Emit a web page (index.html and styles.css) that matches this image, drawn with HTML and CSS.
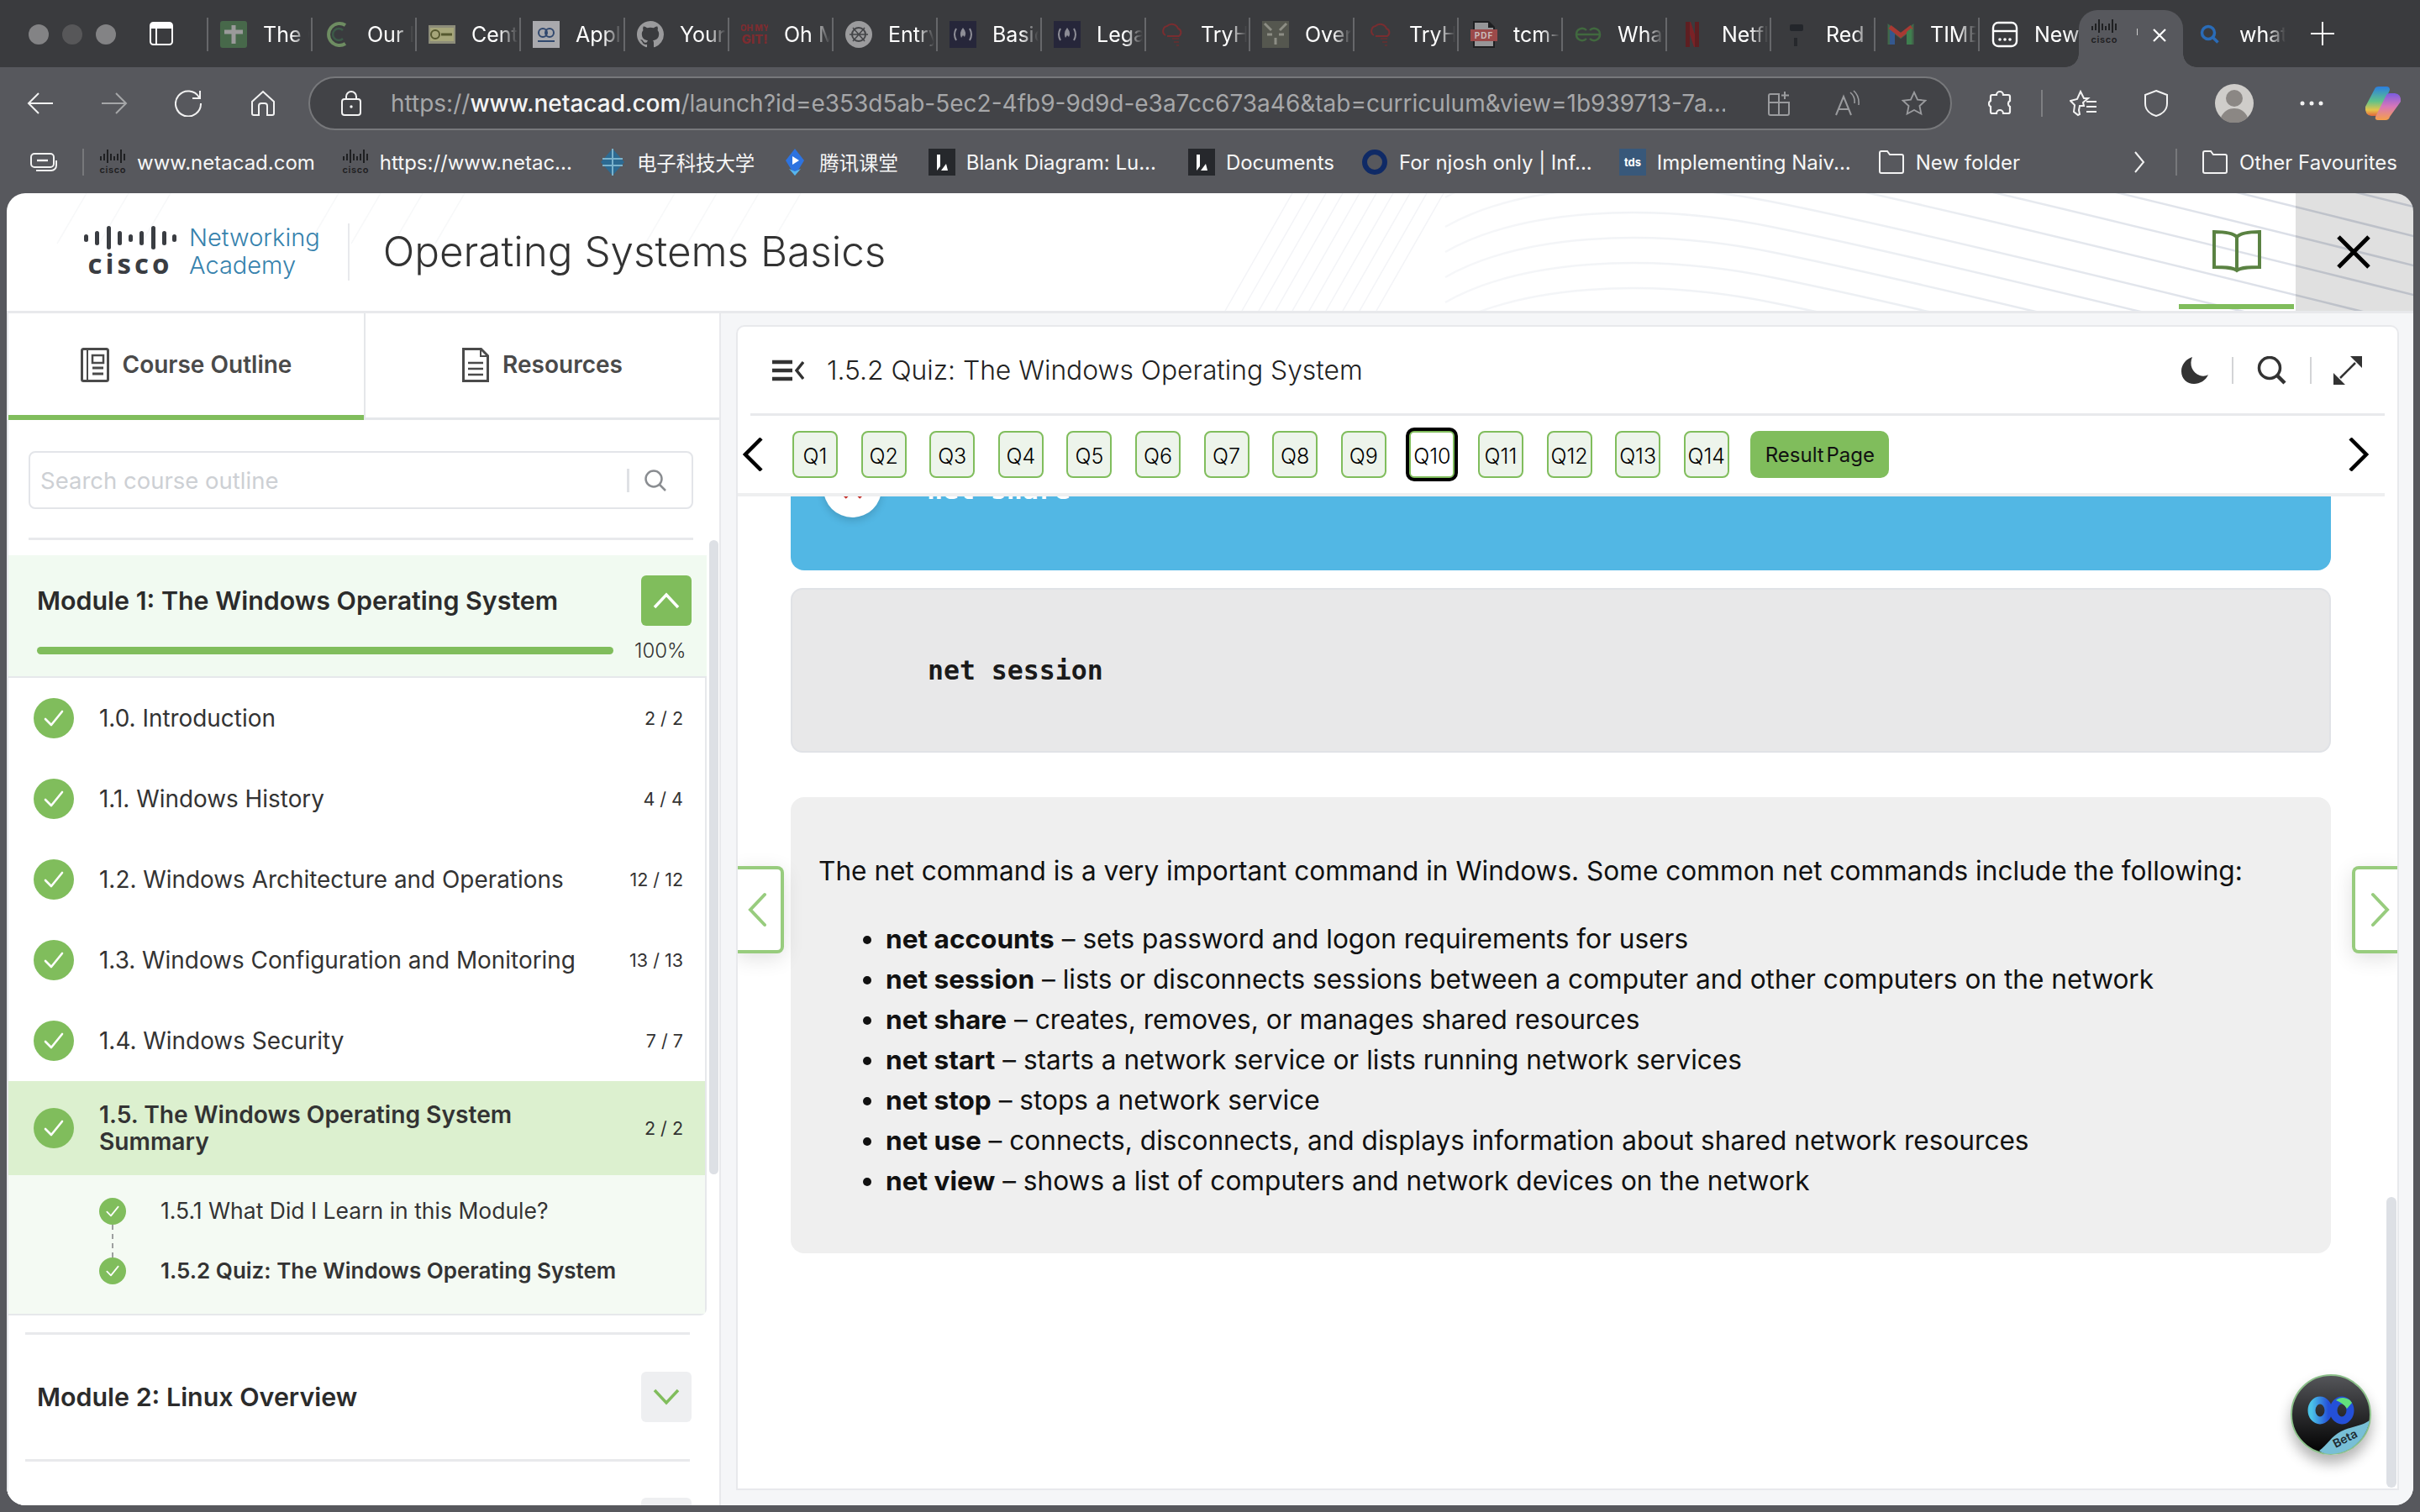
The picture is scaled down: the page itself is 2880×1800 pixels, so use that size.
FILE: index.html
```html
<!DOCTYPE html>
<html lang="en">
<head>
<meta charset="utf-8">
<title>Operating Systems Basics</title>
<link rel="stylesheet" href="styles.css">
</head>
<body>
<svg class="defs" aria-hidden="true">
  <symbol id="cisco" viewBox="0 0 32 32">
    <g fill="#1f2022">
      <rect x="1" y="9" width="2" height="5"/><rect x="5" y="6" width="2" height="8"/><rect x="9" y="1" width="2" height="16"/><rect x="13" y="6" width="2" height="8"/><rect x="17" y="9" width="2" height="5"/><rect x="21" y="6" width="2" height="8"/><rect x="25" y="1" width="2" height="16"/><rect x="29" y="6" width="2" height="8"/>
      <text x="16" y="29" font-size="11" font-family="Inter" font-weight="600" text-anchor="middle" textLength="31">cisco</text>
    </g>
  </symbol>
  <symbol id="check" viewBox="0 0 48 48">
    <circle cx="24" cy="24" r="24" fill="#80bd5c"/>
    <path d="M14 25l7 7 13-16" fill="none" stroke="#fff" stroke-width="2.6" stroke-linecap="round" stroke-linejoin="round"/>
  </symbol>
  <symbol id="lucid" viewBox="0 0 32 32">
    <rect width="32" height="32" fill="#26282c"/>
    <path d="M10 7h4v14l-4 5z" fill="#fff"/><path d="M15 26l6-8 2 8z" fill="#fff"/>
  </symbol>
  <symbol id="fcc" viewBox="0 0 32 32">
    <rect width="32" height="32" fill="#26263a"/>
    <path d="M8 9q-4 7 0 14M24 9q4 7 0 14" fill="none" stroke="#8d8d96" stroke-width="2"/>
    <path d="M16 8q5 6 2 11l-2-2-2 3q-3-6 2-12z" fill="#8d8d96"/>
  </symbol>
  <symbol id="thm" viewBox="0 0 32 32">
    <path d="M9 17a6 6 0 0 1 2-11 8 8 0 0 1 13 3 5 5 0 0 1 1 9H11" fill="none" stroke="#7a2d30" stroke-width="2"/>
    <path d="M17 21h8M19 25h6M22 29h3" stroke="#5c3133" stroke-width="2"/>
  </symbol>
  <symbol id="folder" viewBox="0 0 32 32">
    <path d="M2 5a2 2 0 0 1 2-2h7l3 4h14a2 2 0 0 1 2 2v18a2 2 0 0 1-2 2H4a2 2 0 0 1-2-2z" fill="none" stroke="#f2f2f2" stroke-width="2"/>
  </symbol>
</svg>

<div class="tabstrip">
  <div class="dots"><i class="dot"></i><i class="dot dot-dim"></i><i class="dot"></i></div>
  <svg class="win-icon" viewBox="0 0 28 28"><rect x="1" y="1" width="26" height="26" rx="3.5" fill="none" stroke="#fff" stroke-width="2"/><path d="M1 4.500a3.500 3.500 0 0 1 3.500-3.500h19a3.500 3.500 0 0 1 3.500 3.500v3.500H1z" fill="#fff"/><path d="M8 8v19" stroke="#fff" stroke-width="2"/></svg>
  <div class="tab"><svg class="fav" viewBox="0 0 32 32"><rect width="32" height="32" rx="3" fill="#47684a"/><path d="M16 5v22M5 13h22" stroke="#9a9a9a" stroke-width="5"/></svg><span class="label">The G</span></div>
  <div class="tab"><svg class="fav" viewBox="0 0 32 32"><path d="M25 5a13 13 0 1 0 0 22" fill="none" stroke="#6e8d62" stroke-width="4"/><path d="M22 11a7 7 0 1 0 0 10" fill="none" stroke="#3c5a48" stroke-width="2.500"/></svg><span class="label">Our F</span></div>
  <div class="tab"><svg class="fav" viewBox="0 0 32 32"><rect y="5" width="32" height="22" fill="#8d8d7a"/><rect x="2" y="8" width="28" height="16" fill="#b8b87a" opacity=".6"/><circle cx="8" cy="16" r="5" fill="none" stroke="#55582f" stroke-width="2"/><path d="M15 16h13" stroke="#55582f" stroke-width="3"/></svg><span class="label">Centr</span></div>
  <div class="tab"><svg class="fav" viewBox="0 0 32 32"><rect width="32" height="32" fill="#a9a9ad"/><circle cx="12" cy="14" r="5" fill="none" stroke="#31486e" stroke-width="2"/><circle cx="20" cy="14" r="5" fill="none" stroke="#31486e" stroke-width="2"/><path d="M6 24h20" stroke="#31486e" stroke-width="2"/></svg><span class="label">Apply</span></div>
  <div class="tab"><svg class="fav" viewBox="0 0 16 16"><path fill="#9a9a9c" d="M8 0C3.580 0 0 3.580 0 8c0 3.540 2.290 6.530 5.470 7.590.4.070.55-.17.55-.38v-1.340c-2.230.48-2.690-1.070-2.690-1.070-.37-.93-.89-1.170-.89-1.170-.73-.5.050-.49.05-.49.8.060 1.220.82 1.220.82.720 1.220 1.870.870 2.330.66.070-.52.280-.87.510-1.070-1.780-.2-3.640-.89-3.640-3.950 0-.87.310-1.590.820-2.150-.08-.2-.36-1.020.08-2.120 0 0 .67-.21 2.200.82A7.700 7.700 0 0 1 8 3.870c.68 0 1.360.09 2 .27 1.530-1.040 2.200-.82 2.200-.82.44 1.100.16 1.920.08 2.120.51.56.82 1.270.82 2.150 0 3.070-1.870 3.750-3.650 3.950.29.250.54.730.54 1.480v2.190c0 .21.15.460.55.380A8 8 0 0 0 16 8c0-4.420-3.580-8-8-8z"/></svg><span class="label">Your</span></div>
  <div class="tab"><svg class="fav" viewBox="0 0 32 32"><g fill="#7c2c30" font-family="Inter" font-weight="800"><text x="16" y="12" font-size="10" text-anchor="middle">OH MY</text><text x="16" y="27" font-size="15" text-anchor="middle">GIT!</text></g></svg><span class="label">Oh M</span></div>
  <div class="tab"><svg class="fav" viewBox="0 0 32 32"><circle cx="16" cy="16" r="16" fill="#9b9b9d"/><circle cx="16" cy="16" r="8" fill="none" stroke="#444548" stroke-width="2"/><path d="M9 8l14 16M23 8L9 24M5 16h22" stroke="#444548" stroke-width="1.500"/></svg><span class="label">Entry</span></div>
  <div class="tab"><svg class="fav"><use href="#fcc"/></svg><span class="label">Basic</span></div>
  <div class="tab"><svg class="fav"><use href="#fcc"/></svg><span class="label">Legal</span></div>
  <div class="tab"><svg class="fav"><use href="#thm"/></svg><span class="label">TryHa</span></div>
  <div class="tab"><svg class="fav" viewBox="0 0 32 32"><rect width="32" height="32" fill="#55574f"/><path d="M3 3l8 8M29 3l-8 8M6 16h6M20 16h6M16 20v8" stroke="#8d8e85" stroke-width="3"/></svg><span class="label">Overv</span></div>
  <div class="tab"><svg class="fav"><use href="#thm"/></svg><span class="label">TryHa</span></div>
  <div class="tab"><svg class="fav" viewBox="0 0 32 32"><path d="M3 0h19l7 7v25H3z" fill="#1f2022"/><path d="M5 2h16v6h6v22H5z" fill="#969698"/><rect x="0" y="10" width="32" height="14" fill="#9b4a4a"/><text x="16" y="21" font-size="10" font-family="Inter" font-weight="700" fill="#c9bcbc" text-anchor="middle" letter-spacing="1">PDF</text></svg><span class="label">tcm-s</span></div>
  <div class="tab"><svg class="fav" viewBox="0 0 32 32"><path d="M16 16H2a7 7 0 0 1 12-5M16 16h14a7 7 0 0 0-12-5M2 16a7 7 0 0 0 12 5M30 16a7 7 0 0 1-12 5" fill="none" stroke="#41693f" stroke-width="2.500"/></svg><span class="label">What</span></div>
  <div class="tab"><svg class="fav" viewBox="0 0 32 32"><path d="M8 1h6l10 30h-6z" fill="#7a2226"/><path d="M8 1h5v30H8zM19 1h5v30h-5z" fill="#5e1f22"/></svg><span class="label">Netfli</span></div>
  <div class="tab"><svg class="fav" viewBox="0 0 32 32"><rect x="8" y="4" width="16" height="8" rx="2" fill="#23262b"/><rect x="13" y="20" width="4" height="10" fill="#26282c"/></svg><span class="label">Red T</span></div>
  <div class="tab"><svg class="fav" viewBox="0 0 32 32"><path d="M3 28V8l13 10L29 8v20" fill="none" stroke="#41684a" stroke-width="5"/><path d="M3 28V8l6 5v15z" fill="#34588f"/><path d="M3 7l13 10L29 7" fill="none" stroke="#a83a33" stroke-width="5"/><path d="M23 13l6-5v20h-6z" fill="#3f7f4f"/></svg><span class="label">TIME</span></div>
  <div class="tab"><svg class="fav" viewBox="0 0 32 32"><rect x="2" y="2" width="28" height="28" rx="6" fill="none" stroke="#fff" stroke-width="2.400"/><path d="M2 12h28" stroke="#fff" stroke-width="2.400"/><circle cx="10" cy="22" r="1.800" fill="#fff"/><circle cx="16" cy="22" r="1.800" fill="#fff"/><circle cx="22" cy="22" r="1.800" fill="#fff"/></svg><span class="label label-short">New</span></div>
  <div class="tab-active"><svg class="fav"><use href="#cisco"/></svg><i class="active-mark"></i><svg class="tab-close" viewBox="0 0 18 18"><path d="M2 2l14 14M16 2L2 16" stroke="#fff" stroke-width="2.200"/></svg></div>
  <div class="tab tab-plain"><svg class="fav fav-search" viewBox="0 0 24 24"><circle cx="10" cy="10" r="7.500" fill="none" stroke="#2a6cb8" stroke-width="3.500"/><path d="M15.500 15.500l6 6" stroke="#2a6cb8" stroke-width="3.500"/></svg><span class="label">what</span></div>
  <svg class="plus" viewBox="0 0 28 28"><path d="M14 0v28M0 14h28" stroke="#fff" stroke-width="2"/></svg>
</div>

<div class="toolbar">
  <svg class="tool" viewBox="0 0 32 28"><path d="M31 14H2M14 2L2 14l12 12" fill="none" stroke="#f2f2f2" stroke-width="2"/></svg>
  <svg class="tool tool-dim" viewBox="0 0 32 28"><path d="M1 14h29M18 2l12 12-12 12" fill="none" stroke="#a5a6a8" stroke-width="2"/></svg>
  <svg class="tool tool-reload" viewBox="0 0 32 32"><path d="M29 9a15 15 0 1 0 2 7" fill="none" stroke="#f2f2f2" stroke-width="2"/><path d="M30 1v9h-9" fill="none" stroke="#f2f2f2" stroke-width="2"/></svg>
  <svg class="tool tool-home" viewBox="0 0 28 30"><path d="M1 13L14 1l13 12v14a2 2 0 0 1-2 2h-6V18a3 3 0 0 0-3-3h-4a3 3 0 0 0-3 3v11H3a2 2 0 0 1-2-2z" fill="none" stroke="#f2f2f2" stroke-width="2"/></svg>
  <div class="address">
    <svg class="lock" viewBox="0 0 24 30"><path d="M6 11V7a6 6 0 0 1 12 0v4" fill="none" stroke="#f2f2f2" stroke-width="2"/><rect x="1" y="10" width="22" height="19" rx="3" fill="none" stroke="#f2f2f2" stroke-width="2"/><circle cx="12" cy="19" r="1.700" fill="#f2f2f2"/></svg>
    <span class="url">https://<b class="url-host">www.netacad.com</b>/launch?id=e353d5ab-5ec2-4fb9-9d9d-e3a7cc673a46&amp;tab=curriculum&amp;view=1b939713-7a...</span>
    <svg class="addr-icon" viewBox="0 0 30 32"><path d="M21 2v9M17 6.500h9M14 5H4a2 2 0 0 0-2 2v21a2 2 0 0 0 2 2h20a2 2 0 0 0 2-2V15H14zM2 15h12v15" fill="none" stroke="#9a9b9e" stroke-width="2"/></svg>
    <svg class="addr-icon" viewBox="0 0 30 32"><path d="M2 30L11 8l9 22M5 23h12" fill="none" stroke="#9a9b9e" stroke-width="2"/><path d="M19 3q6 5 5 13M23 1q7 6 6 17" fill="none" stroke="#9a9b9e" stroke-width="1.600"/></svg>
    <svg class="addr-icon" viewBox="0 0 32 32"><path d="M16 2l4.300 9.300 10 1.200-7.400 6.900 2 10L16 24.500l-8.900 4.900 2-10L1.700 12.500l10-1.200z" fill="none" stroke="#9a9b9e" stroke-width="2"/></svg>
  </div>
  <svg class="tool tool-ext" viewBox="0 0 30 32"><path d="M10 6a4 4 0 0 1 8 0h6a2 2 0 0 1 2 2v5a4 4 0 0 0 0 7v6a2 2 0 0 1-2 2h-6a4 4 0 0 0-8 0H5a2 2 0 0 1-2-2v-6a4 4 0 0 1 0-7V8a2 2 0 0 1 2-2z" fill="none" stroke="#f2f2f2" stroke-width="2.200"/></svg>
  <i class="tool-sep"></i>
  <svg class="tool tool-fav" viewBox="0 0 32 32"><path d="M13 2l4 8h5l-6 5 1 4H12l-1 5 1 5-2 1-5-4 1-8-5-5 8-2z" fill="none" stroke="#f2f2f2" stroke-width="2"/><path d="M20 14h12M20 20h12M20 26h12" stroke="#f2f2f2" stroke-width="2"/></svg>
  <svg class="tool tool-shield" viewBox="0 0 30 34"><path d="M15 2l13 5v10c0 8-6 13-13 15C8 30 2 25 2 17V7z" fill="none" stroke="#f2f2f2" stroke-width="2"/></svg>
  <svg class="avatar" viewBox="0 0 46 46"><circle cx="23" cy="23" r="23" fill="#cfcdca"/><circle cx="23" cy="17" r="10" fill="#8b8784"/><path d="M7 40c3-8 10-11 16-11s13 3 16 11a23 23 0 0 1-32 0z" fill="#8b8784"/></svg>
  <svg class="more" viewBox="0 0 28 6"><circle cx="3" cy="3" r="2.500" fill="#f2f2f2"/><circle cx="14" cy="3" r="2.500" fill="#f2f2f2"/><circle cx="25" cy="3" r="2.500" fill="#f2f2f2"/></svg>
  <svg class="copilot" viewBox="0 0 44 40"><defs><linearGradient id="cp1" x1="0" y1="0" x2="0" y2="1"><stop offset="0" stop-color="#2b7fe0"/><stop offset=".5" stop-color="#5fc28a"/><stop offset=".8" stop-color="#e6c34a"/><stop offset="1" stop-color="#e2663c"/></linearGradient><linearGradient id="cp2" x1="0" y1="0" x2="0" y2="1"><stop offset="0" stop-color="#7a5ce0"/><stop offset=".5" stop-color="#d877b8"/><stop offset="1" stop-color="#f5a04a"/></linearGradient></defs><path d="M12 3q1-3 5-3h9q4 0 4 4L18 32q-1 3-4 3H8q-8-1-7-11z" fill="url(#cp1)"/><path d="M30 36q-1 4-5 4h-9q-4 0-3-4L26 10q1-2 4-2h6q8 1 7 10z" fill="url(#cp2)"/></svg>
</div>

<div class="bookmarks">
  <svg class="bm-coll" viewBox="0 0 32 22"><rect x="1" y="1" width="27" height="16" rx="4" fill="none" stroke="#f2f2f2" stroke-width="2"/><path d="M8 9h13" stroke="#f2f2f2" stroke-width="2.400"/><path d="M31 9v6a6 6 0 0 1-6 6H7" fill="none" stroke="#f2f2f2" stroke-width="2"/></svg>
  <i class="bm-sep"></i>
  <div class="bm"><svg class="bm-ico"><use href="#cisco"/></svg><span>www.netacad.com</span></div>
  <div class="bm"><svg class="bm-ico"><use href="#cisco"/></svg><span>https://www.netac...</span></div>
  <div class="bm"><svg class="bm-ico" viewBox="0 0 32 32"><path d="M16 0l14 16-14 16L2 16z" fill="#2c6a92"/><path d="M4 12h24M4 20h24M16 0v32" stroke="#7ab2cc" stroke-width="2"/></svg><span class="cjk">电子科技大学</span></div>
  <div class="bm"><svg class="bm-ico" viewBox="0 0 32 32"><path d="M16 0l11 14-11 18L5 14z" fill="#2d73e0"/><path d="M13 9l8 5-8 5z" fill="#fff"/><path d="M9 24l7 8 7-8-7 3z" fill="#57b6ec"/></svg><span class="cjk">腾讯课堂</span></div>
  <div class="bm bm-blank"><svg class="bm-ico"><use href="#lucid"/></svg><span>Blank Diagram: Lu...</span></div>
  <div class="bm bm-docs"><svg class="bm-ico"><use href="#lucid"/></svg><span>Documents</span></div>
  <div class="bm"><svg class="bm-ico" viewBox="0 0 32 32"><circle cx="16" cy="16" r="12" fill="none" stroke="#0f2a66" stroke-width="6"/></svg><span>For njosh only | Inf...</span></div>
  <div class="bm"><svg class="bm-ico" viewBox="0 0 32 32"><rect width="32" height="32" fill="#38587a"/><text x="16" y="21" font-size="13" font-weight="700" font-family="Inter" fill="#fff" text-anchor="middle">tds</text></svg><span>Implementing Naiv...</span></div>
  <div class="bm"><svg class="bm-ico"><use href="#folder"/></svg><span>New folder</span></div>
  <svg class="bm-more" viewBox="0 0 14 26"><path d="M2 1l10 12L2 25" fill="none" stroke="#f2f2f2" stroke-width="2"/></svg>
  <i class="bm-sep bm-sep-right"></i>
  <div class="bm"><svg class="bm-ico"><use href="#folder"/></svg><span>Other Favourites</span></div>
</div>

<div class="app">
  <header class="app-header">
    <svg class="swirl" viewBox="0 0 2864 140" aria-hidden="true">
      <defs>
        <linearGradient id="swirlStroke" gradientUnits="userSpaceOnUse" x1="1700" y1="0" x2="2800" y2="0"><stop offset="0" stop-color="#f6f7f9"/><stop offset=".5" stop-color="#eceff3"/><stop offset="1" stop-color="#d8dce5"/></linearGradient>
        <path id="arc" d="M1712 70C1800 20 1950 10 2100 40S2500 130 2900 230" fill="none" stroke="url(#swirlStroke)" stroke-width="2.500"/>
        <path id="fan" d="M1570 140L1650 0" fill="none" stroke="#f3f4f7" stroke-width="1.500"/>
        <path id="fanFar" d="M60 60L95 0" fill="none" stroke="#f7f8f9" stroke-width="1.500"/>
      </defs>
      <use href="#arc" y="-240"/><use href="#arc" y="-205"/><use href="#arc" y="-170"/><use href="#arc" y="-135"/><use href="#arc" y="-100"/><use href="#arc" y="-65"/><use href="#arc" y="-30"/><use href="#arc" y="0"/><use href="#arc" y="30"/><use href="#arc" y="60"/><use href="#arc" y="90"/>
      <use href="#fan" x="-120"/><use href="#fan" x="-100"/><use href="#fan" x="-80"/><use href="#fan" x="-60"/><use href="#fan" x="-40"/><use href="#fan" x="-20"/><use href="#fan"/><use href="#fan" x="20"/><use href="#fan" x="40"/><use href="#fan" x="60"/>
      <use href="#fanFar"/><use href="#fanFar" x="50"/><use href="#fanFar" x="100"/><use href="#fanFar" x="300"/><use href="#fanFar" x="350"/><use href="#fanFar" x="400"/><use href="#fanFar" x="450"/><use href="#fanFar" x="700"/><use href="#fanFar" x="750"/><use href="#fanFar" x="800"/><use href="#fanFar" x="850"/>
    </svg>
    <div class="brand">
      <div class="cisco-logo">
        <svg class="cisco-bars" viewBox="0 0 110 28"><g fill="#3a3d42"><rect x="0" y="10" width="5" height="9" rx="2.500"/><rect x="13" y="6" width="5" height="17" rx="2.500"/><rect x="27" y="0" width="5" height="28" rx="2.500"/><rect x="40" y="6" width="5" height="17" rx="2.500"/><rect x="53" y="10" width="5" height="9" rx="2.500"/><rect x="66" y="6" width="5" height="17" rx="2.500"/><rect x="80" y="0" width="5" height="28" rx="2.500"/><rect x="93" y="6" width="5" height="17" rx="2.500"/><rect x="105" y="10" width="5" height="9" rx="2.500"/></g></svg>
        <span class="cisco-word">cisco</span>
      </div>
      <div class="academy"><span>Networking</span><span>Academy</span></div>
    </div>
    <h1 class="course-title">Operating Systems Basics</h1>
    <div class="book-tab">
      <svg class="book" viewBox="0 0 58 52"><path d="M29 8C24 3 12 2 2 2v42c10 0 22 0 27 4 5-4 17-4 27-4V2C46 2 34 3 29 8zM29 8v40" fill="none" stroke="#5a8242" stroke-width="4"/></svg>
    </div>
    <div class="close-tab"><svg class="close-x" viewBox="0 0 40 40"><path d="M2 2l36 36M38 2L2 38" stroke="#000" stroke-width="5"/></svg></div>
  </header>

  <div class="app-body">
    <aside class="sidebar">
      <div class="side-tabs">
        <div class="side-tab side-tab-on">
          <svg class="side-ico" viewBox="0 0 34 41"><rect x="1.500" y="1.500" width="31" height="38" rx="2" fill="none" stroke="#4a4a4a" stroke-width="3"/><path d="M8 2v37" stroke="#4a4a4a" stroke-width="2"/><rect x="14" y="9" width="13" height="9" fill="none" stroke="#4a4a4a" stroke-width="2.500"/><path d="M14 24h13M14 31h13" stroke="#4a4a4a" stroke-width="3"/></svg>
          <span>Course Outline</span>
        </div>
        <div class="side-tab">
          <svg class="side-ico side-ico-doc" viewBox="0 0 32 41"><path d="M1.500 1.500h21l8 8v30h-29z" fill="none" stroke="#4a4a4a" stroke-width="3"/><path d="M22 2v8h8" fill="none" stroke="#4a4a4a" stroke-width="2"/><path d="M7 18h18M7 25h18M7 32h18" stroke="#4a4a4a" stroke-width="2.500"/></svg>
          <span>Resources</span>
        </div>
      </div>
      <div class="search">
        <span class="search-ph">Search course outline</span>
        <i class="search-sep"></i>
        <svg class="search-ico" viewBox="0 0 26 26"><circle cx="11" cy="11" r="9.500" fill="none" stroke="#8a8d91" stroke-width="2.500"/><path d="M18 18l7 7" stroke="#8a8d91" stroke-width="2.500"/></svg>
      </div>
      <hr class="side-rule side-rule-top">
      <section class="module-open">
        <div class="module-head">
          <h2 class="module-title">Module 1: The Windows Operating System</h2>
          <span class="mod-btn mod-btn-on"><svg viewBox="0 0 32 20"><path d="M2 18L16 3l14 15" fill="none" stroke="#fff" stroke-width="3.500"/></svg></span>
        </div>
        <div class="progress"><div class="bar"></div><span class="pct">100%</span></div>
      </section>
      <div class="lessons">
        <div class="row"><svg class="chk"><use href="#check"/></svg><span class="row-title">1.0. Introduction</span><span class="count">2 / 2</span></div>
        <div class="row"><svg class="chk"><use href="#check"/></svg><span class="row-title">1.1. Windows History</span><span class="count">4 / 4</span></div>
        <div class="row"><svg class="chk"><use href="#check"/></svg><span class="row-title">1.2. Windows Architecture and Operations</span><span class="count">12 / 12</span></div>
        <div class="row"><svg class="chk"><use href="#check"/></svg><span class="row-title">1.3. Windows Configuration and Monitoring</span><span class="count">13 / 13</span></div>
        <div class="row"><svg class="chk"><use href="#check"/></svg><span class="row-title">1.4. Windows Security</span><span class="count">7 / 7</span></div>
        <div class="row row-on"><svg class="chk"><use href="#check"/></svg><span class="row-title">1.5. The Windows Operating System Summary</span><span class="count">2 / 2</span></div>
        <div class="subs">
          <div class="sub"><svg class="chk-sm"><use href="#check"/></svg><span>1.5.1 What Did I Learn in this Module?</span></div>
          <div class="sub-link"></div>
          <div class="sub sub-on"><svg class="chk-sm"><use href="#check"/></svg><span>1.5.2 Quiz: The Windows Operating System</span></div>
        </div>
      </div>
      <hr class="side-rule side-rule-mid">
      <section class="module-closed">
        <h2 class="module-title">Module 2: Linux Overview</h2>
        <span class="mod-btn"><svg viewBox="0 0 32 20"><path d="M2 2l14 15L30 2" fill="none" stroke="#80bd5c" stroke-width="3.500"/></svg></span>
      </section>
      <hr class="side-rule side-rule-end">
      <span class="mod-btn mod-btn-next"></span>
      <i class="side-scroll"></i>
    </aside>

    <main class="content-card">
      <div class="content-head">
        <svg class="menu-ico" viewBox="0 0 38 26"><path d="M0 3h24M0 13h24M0 23h24" stroke="#333" stroke-width="4.500"/><path d="M37 3L29 13l8 10" fill="none" stroke="#333" stroke-width="3.500"/></svg>
        <span class="content-title">1.5.2 Quiz: The Windows Operating System</span>
        <div class="head-tools">
          <svg class="ht-moon" viewBox="0 0 32 32"><path d="M13 0C5 3 0 9 0 17c0 9 7 15 15 15 7 0 14-4 17-11-3 2-7 2-10 1C13 19 9 9 13 0z" fill="#333"/></svg>
          <i class="ht-sep"></i>
          <svg class="ht-search" viewBox="0 0 35 34"><circle cx="15" cy="14" r="12.500" fill="none" stroke="#333" stroke-width="3.500"/><path d="M24 23l9 9" stroke="#333" stroke-width="4.500"/></svg>
          <i class="ht-sep"></i>
          <svg class="ht-expand" viewBox="0 0 34 34"><path d="M8 26L26 8" stroke="#333" stroke-width="2.500"/><path d="M34 0v14l-5-5-4-4-5-5zM0 34V20l5 5 4 4 5 5z" fill="#333"/></svg>
        </div>
      </div>
      <div class="qnav">
        <svg class="qchev" viewBox="0 0 24 40"><path d="M22 1L3 20l19 19" fill="none" stroke="#000" stroke-width="4.500"/></svg>
        <div class="qlist">
          <span class="q">Q1</span><span class="q">Q2</span><span class="q">Q3</span><span class="q">Q4</span><span class="q">Q5</span><span class="q">Q6</span><span class="q">Q7</span><span class="q">Q8</span><span class="q">Q9</span><span class="q q-on">Q10</span><span class="q">Q11</span><span class="q">Q12</span><span class="q">Q13</span><span class="q">Q14</span>
          <span class="result">Result Page</span>
        </div>
        <svg class="qchev qchev-next" viewBox="0 0 24 40"><path d="M2 1l19 19L2 39" fill="none" stroke="#000" stroke-width="4.500"/></svg>
      </div>
      <div class="scroller">
        <div class="answer-wrong">
          <span class="wrong-badge"><svg viewBox="0 0 30 30"><path d="M5 5l20 20M25 5L5 25" stroke="#c4312c" stroke-width="5"/></svg></span>
          <code class="answer-code">net share</code>
        </div>
        <div class="answer-right"><code class="answer-code">net session</code></div>
        <div class="explain">
          <p class="explain-lead">The net command is a very important command in Windows. Some common net commands include the following:</p>
          <ul class="explain-list">
            <li><b>net accounts</b> – sets password and logon requirements for users</li>
            <li><b>net session</b> – lists or disconnects sessions between a computer and other computers on the network</li>
            <li><b>net share</b> – creates, removes, or manages shared resources</li>
            <li><b>net start</b> – starts a network service or lists running network services</li>
            <li><b>net stop</b> – stops a network service</li>
            <li><b>net use</b> – connects, disconnects, and displays information about shared network resources</li>
            <li><b>net view</b> – shows a list of computers and network devices on the network</li>
          </ul>
        </div>
      </div>
      <button class="pager pager-prev"><svg viewBox="0 0 22 42"><path d="M20 3L3 21l17 18" fill="none" stroke="#98cc7e" stroke-width="4" stroke-linecap="round"/></svg></button>
      <button class="pager pager-next"><svg viewBox="0 0 22 42"><path d="M2 3l17 18L2 39" fill="none" stroke="#98cc7e" stroke-width="4" stroke-linecap="round"/></svg></button>
      <i class="main-scroll"></i>
      <div class="webex">
        <svg viewBox="0 0 96 96">
          <defs><linearGradient id="wxBg" x1="0" y1="0" x2="0" y2="1"><stop offset="0" stop-color="#55565a"/><stop offset="1" stop-color="#000"/></linearGradient><linearGradient id="wxLoop" x1="0" y1="0" x2="1" y2="0"><stop offset="0" stop-color="#4bc3e8"/><stop offset="1" stop-color="#2450d8"/></linearGradient></defs>
          <circle cx="48" cy="48" r="47" fill="url(#wxBg)" stroke="#8cc08a" stroke-width="2"/>
          <ellipse cx="35" cy="43" rx="10" ry="12" fill="none" stroke="url(#wxLoop)" stroke-width="9"/>
          <ellipse cx="61" cy="43" rx="10" ry="12" fill="none" stroke="#2450d8" stroke-width="9"/>
          <path d="M54 31c4-4 14-5 19 3l-6 7c-3-5-8-8-13-10z" fill="#62e07c"/>
          <path d="M34 91C44 84 48 74 60 68S84 62 94 55C90 78 70 95 48 95c-5 0-10-1-14-4z" fill="#78bfd6"/>
          <text class="wx-beta" x="67" y="81" text-anchor="middle" transform="rotate(-27 67 81)">Beta</text>
        </svg>
      </div>
    </main>
  </div>
</div>
</body>
</html>
```
FILE: styles.css
```css
* { box-sizing: border-box; }
html, body { margin: 0; padding: 0; }
body {
  width: 2880px;
  height: 1800px;
  overflow: hidden;
  background: #57585d;
  font-family: Inter, "Noto Sans CJK SC", sans-serif;
  color: #111;
}
.defs { position: absolute; width: 0; height: 0; }
i { display: block; }

/* tab strip */
.tabstrip {
  height: 80px;
  background: #3a3b3e;
  display: flex;
  align-items: flex-start;
  padding-left: 34px;
}
.dots { display: flex; gap: 16px; margin-top: 29px; }
.dot { width: 24px; height: 24px; border-radius: 50%; background: #838385; }
.dot-dim { background: #575759; }
.win-icon { width: 28px; height: 28px; margin: 26px 40px 0 40px; }
.tab {
  width: 124px;
  height: 40px;
  margin-top: 21px;
  display: flex;
  align-items: center;
  padding-left: 14px;
  border-left: 2px solid #66676a;
  flex: none;
}
.fav { width: 32px; height: 32px; flex: none; }
.label {
  margin-left: 19px;
  width: 55px;
  overflow: hidden;
  white-space: nowrap;
  font-size: 25px;
  color: #fff;
  -webkit-mask-image: linear-gradient(90deg, #000 60%, transparent 100%);
  mask-image: linear-gradient(90deg, #000 60%, transparent 100%);
}
.label-short { -webkit-mask-image: linear-gradient(90deg, #000 70%, rgba(0,0,0,.6) 100%); mask-image: linear-gradient(90deg, #000 70%, rgba(0,0,0,.6) 100%); }
.tab-active {
  width: 124px;
  height: 68px;
  margin: 12px 0 0 -4px;
  background: #57585d;
  border-radius: 22px 22px 0 0;
  display: flex;
  align-items: flex-start;
  padding: 10px 0 0 14px;
  position: relative;
  flex: none;
}
.tab-active::before, .tab-active::after {
  content: "";
  position: absolute;
  bottom: 0;
  width: 16px;
  height: 16px;
}
.tab-active::before { left: -16px; background: radial-gradient(circle at 0 0, transparent 15.500px, #57585d 16px); }
.tab-active::after { right: -16px; background: radial-gradient(circle at 100% 0, transparent 15.500px, #57585d 16px); }
.active-mark { width: 1px; height: 8px; background: #ccc; margin: 12px 0 0 23px; }
.tab-close { width: 18px; height: 18px; margin: 11px 0 0 17px; }
.tab-plain { border-left-color: transparent; }
.fav-search { width: 24px; height: 24px; margin: 0 4px; }
.plus { width: 28px; height: 28px; margin: 26px 0 0 28px; flex: none; }

/* toolbar */
.toolbar {
  height: 85px;
  display: flex;
  align-items: center;
  padding-left: 32px;
}
.tool { width: 32px; height: 32px; flex: none; margin-right: 56px; }
.tool-reload { margin-right: 59px; }
.tool-home { width: 28px; margin-right: 40px; }
.tool-ext { width: 30px; margin-right: 33px; margin-left: 43px; }
.tool-sep { width: 2px; height: 32px; background: #7e7f82; margin-right: 32px; flex: none; }
.tool-fav { margin-right: 56px; }
.tool-shield { width: 30px; margin-right: 55px; height: 34px; }
.avatar { width: 46px; height: 46px; flex: none; margin-right: 55px; }
.more { width: 28px; height: 6px; flex: none; margin-right: 49px; }
.copilot { width: 44px; height: 40px; flex: none; }
.address {
  width: 1956px;
  height: 64px;
  border: 2px solid #77787b;
  border-radius: 32px;
  background: #424347;
  display: flex;
  align-items: center;
  padding-left: 37px;
  flex: none;
}
.lock { width: 24px; height: 30px; flex: none; margin-right: 35px; }
.url {
  width: 1588px;
  font-size: 28px;
  color: #a6a7a9;
  white-space: nowrap;
  overflow: hidden;
  flex: none;
}
.url-host { font-weight: 500; color: #f4f4f4; }
.addr-icon { width: 30px; height: 32px; flex: none; margin-left: 50px; }

/* bookmarks */
.bookmarks {
  height: 65px;
  padding: 0 0 9px 36px;
  display: flex;
  align-items: center;
  font-size: 24px;
  color: #f6f6f6;
}
.bm-coll { width: 32px; height: 22px; flex: none; }
.bm-sep { width: 2px; height: 32px; background: #77787b; margin: 0 18px 0 30px; flex: none; }
.bm { display: flex; align-items: center; gap: 13px; margin-right: 32px; white-space: nowrap; flex: none; }
.bm-blank { margin-left: 4px; }
.bm-docs { margin-left: 6px; }
.bm-ico { width: 32px; height: 32px; flex: none; }
.cjk { font-family: "Noto Sans CJK SC", sans-serif; font-size: 23.400px; }
.bm-more { width: 14px; height: 26px; flex: none; margin-left: 103px; }
.bm-sep-right { margin: 0 29px 0 36px; }

/* app */
.app {
  width: 2864px;
  height: 1562px;
  margin-left: 8px;
  border-radius: 22px;
  background: #fff;
  overflow: hidden;
  display: flex;
  flex-direction: column;
}
.app-header {
  height: 140px;
  flex: none;
  display: flex;
  align-items: center;
  position: relative;
  padding-left: 92px;
}
.swirl { position: absolute; inset: 0; width: 2864px; height: 140px; }
.brand { display: flex; align-items: center; position: relative; height: 64px; }
.cisco-logo { width: 110px; display: flex; flex-direction: column; align-items: center; }
.cisco-bars { width: 110px; height: 28px; }
.cisco-word {
  font-family: "Open Sans", sans-serif;
  font-weight: 700;
  font-size: 33px;
  line-height: 34px;
  letter-spacing: 4px;
  color: #3a3d42;
}
.academy {
  display: flex;
  flex-direction: column;
  margin-left: 15px;
  padding: 0 33px 2px 0;
  border-right: 2px solid #e8e9ec;
  font-size: 29px;
  line-height: 33px;
  color: #3682ad;
  font-weight: 300;
}
.course-title {
  position: relative;
  margin: 0 0 2px 40px;
  font-size: 49.400px;
  font-weight: 300;
  color: #333;
  white-space: nowrap;
}
.book-tab {
  position: relative;
  margin-left: auto;
  width: 137px;
  height: 140px;
  display: flex;
  justify-content: center;
  padding-top: 44px;
}
.book-tab::after {
  content: "";
  position: absolute;
  left: 0;
  right: 0;
  bottom: 2px;
  height: 6px;
  background: #80bd5c;
}
.book { width: 58px; height: 52px; }
.close-tab {
  position: relative;
  width: 140px;
  height: 140px;
  margin-left: 2px;
  background: rgba(0, 0, 0, .12);
  display: flex;
  align-items: center;
  justify-content: center;
}
.close-x { width: 40px; height: 40px; margin-left: -2px; }

.app-body {
  height: 1422px;
  display: flex;
  background: #f5f6f8;
  border-top: 3px solid #e8e9ec;
}
.sidebar {
  width: 850px;
  flex: none;
  background: #fff;
  border-left: 2px solid #e8e9ec;
  border-right: 2px solid #e8e9ec;
  position: relative;
  overflow: hidden;
}
.side-tabs { display: flex; height: 127px; border-bottom: 3px solid #e5e7ea; }
.side-tab {
  flex: 1;
  display: flex;
  align-items: center;
  justify-content: center;
  gap: 16px;
  padding-bottom: 2px;
  font-size: 28px;
  font-weight: 600;
  color: #4a4a4a;
  border-left: 2px solid #e5e7ea;
  position: relative;
}
.side-tab-on { flex: none; width: 423px; border-left: 0; }
.side-tab-on::after {
  content: "";
  position: absolute;
  left: 0;
  right: 0;
  bottom: -3px;
  height: 6px;
  background: #80bd5c;
}
.side-ico { width: 34px; height: 41px; flex: none; }
.side-ico-doc { width: 32px; }
.search {
  margin: 37px 31px 0 24px;
  height: 69px;
  border: 2px solid #e3e5e9;
  border-radius: 8px;
  display: flex;
  align-items: center;
  padding: 0 30px 0 12px;
}
.search-ph { flex: 1; font-size: 27.500px; color: #cdd0d4; }
.search-sep { width: 3px; height: 28px; background: #dfe1e5; margin-right: 18px; }
.search-ico { width: 26px; height: 26px; }
.side-rule { border: 0; height: 3px; background: #e8e9ec; margin: 0; }
.side-rule-top { margin: 34px 31px 0 24px; }
.module-open {
  margin-top: 18px;
  width: 831px;
  height: 144px;
  background: #f1faf1;
  padding: 24px 18px 0 34px;
}
.module-head { display: flex; align-items: center; justify-content: space-between; height: 60px; }
.module-title { margin: 0; font-size: 30.400px; font-weight: 600; color: #2b2b2b; white-space: nowrap; }
.mod-btn {
  width: 60px;
  height: 60px;
  border-radius: 6px;
  background: #eeeff1;
  display: flex;
  align-items: center;
  justify-content: center;
  flex: none;
}
.mod-btn svg { width: 32px; height: 20px; }
.mod-btn-on { background: #80bd5c; }
.progress { display: flex; align-items: center; margin-top: 15px; height: 28px; }
.bar { width: 686px; height: 9px; border-radius: 5px; background: #80bd5c; }
.pct { margin-left: 25px; font-size: 24px; font-weight: 300; color: #333; }
.lessons {
  width: 831px;
  border-top: 2px solid #e6e8eb;
  border-right: 2px solid #e6e8eb;
  border-bottom: 2px solid #e6e8eb;
  border-radius: 0 0 8px 0;
}
.row {
  height: 96px;
  display: flex;
  align-items: center;
  padding: 0 26px 0 30px;
}
.chk { width: 48px; height: 48px; flex: none; }
.row-title { margin-left: 30px; font-size: 27.900px; line-height: 32px; color: #333; max-width: 600px; }
.count { margin-left: auto; font-size: 21.500px; color: #333; white-space: nowrap; }
.row-on { height: 112px; background: #dcf0cf; }
.row-on .row-title { font-weight: 600; font-size: 28.200px; }
.subs {
  height: 165px;
  background: #f4faf3;
  padding-top: 27px;
}
.sub {
  height: 32px;
  display: flex;
  align-items: center;
  padding-left: 108px;
  font-size: 26.500px;
  color: #333;
  white-space: nowrap;
}
.sub span { position: relative; top: -1px; }
.chk-sm { width: 32px; height: 32px; flex: none; margin-right: 41px; }
.sub-on { font-weight: 600; font-size: 26px; }
.sub-link { width: 0; height: 39px; margin-left: 123px; border-left: 2px dashed #9d9f9f; }
.side-rule-mid { margin: 20px 35px 0 20px; }
.module-closed {
  height: 148px;
  padding: 0 20px 0 34px;
  display: flex;
  align-items: center;
  justify-content: space-between;
  width: 833px;
}
.side-rule-end { margin: 0 35px 0 20px; }
.mod-btn-next { margin: 43px 0 0 753px; }
.side-scroll {
  position: absolute;
  left: 834px;
  top: 270px;
  width: 11px;
  height: 755px;
  border-radius: 6px;
  background: #dde0e5;
}

/* main card */
.content-card {
  flex: none;
  width: 1979px;
  height: 1387px;
  margin: 14px 0 0 18px;
  background: #fff;
  border: 2px solid #e8e9ec;
  border-radius: 10px 10px 0 0;
  position: relative;
  overflow: hidden;
  display: flex;
  flex-direction: column;
}
.content-head {
  height: 106px;
  flex: none;
  margin: 0 15px;
  border-bottom: 3px solid #e8e9ec;
  display: flex;
  align-items: center;
  padding: 0 25px 0 26px;
}
.menu-ico { width: 38px; height: 26px; flex: none; }
.content-title { margin-left: 27px; font-size: 31.800px; font-weight: 300; color: #222; white-space: nowrap; }
.head-tools { margin-left: auto; display: flex; align-items: center; }
.ht-moon { width: 32px; height: 32px; }
.ht-sep { width: 2px; height: 32px; background: #d3d4d6; margin: 0 28px; }
.ht-search { width: 35px; height: 34px; }
.ht-expand { width: 34px; height: 34px; margin-left: -2px; margin-right: 2px; }
.qnav {
  height: 96px;
  flex: none;
  margin-right: 15px;
  border-bottom: 4px solid #eeeff0;
  display: flex;
  align-items: center;
  padding: 0 19px 0 6px;
}
.qchev { width: 24px; height: 40px; flex: none; }
.qchev-next { margin-left: auto; }
.qlist { display: flex; align-items: center; margin-left: 35px; gap: 27.600px; }
.q {
  width: 54px;
  height: 56px;
  border: 2px solid #80bd5c;
  border-radius: 8px;
  background: #edf4eb;
  display: flex;
  align-items: center;
  justify-content: center;
  padding-top: 3px;
  font-size: 25px;
  font-weight: 300;
  color: #000;
}
.q-on { background: #fff; box-shadow: 0 0 0 4px #000; border-radius: 6px; }
.result {
  width: 165px;
  height: 56px;
  margin-left: -2px;
  background: #80bd5c;
  border-radius: 10px;
  display: flex;
  align-items: center;
  justify-content: center;
  font-size: 24px;
  word-spacing: -4px;
  color: #111;
}
.scroller {
  flex: 1;
  min-height: 0;
  overflow: hidden;
  padding: 0 79px 0 63px;
}
.answer-wrong {
  height: 160px;
  margin-top: -72px;
  background: #52b7e4;
  border-radius: 16px;
  display: flex;
  align-items: flex-start;
  padding: 28px 0 0 39px;
}
.wrong-badge {
  width: 69px;
  height: 69px;
  border-radius: 50%;
  background: #fff;
  box-shadow: 0 4px 10px rgba(0, 0, 0, .15);
  display: flex;
  align-items: center;
  justify-content: center;
  flex: none;
}
.wrong-badge svg { width: 30px; height: 30px; }
.answer-code {
  font-family: "DejaVu Sans Mono", monospace;
  font-weight: 700;
  font-size: 31.500px;
}
.answer-wrong .answer-code { color: #fff; margin: 18px 0 0 54px; }
.answer-right {
  height: 196px;
  margin-top: 21px;
  background: #e8e8e9;
  border: 2px solid #e0e2e6;
  border-radius: 14px;
  display: flex;
  align-items: center;
  padding-left: 161px;
  color: #1a1a1a;
}
.explain {
  height: 543px;
  margin-top: 53px;
  background: #efefef;
  border-radius: 16px;
  padding: 64px 33px 0;
  font-size: 31.600px;
  line-height: 48px;
  color: #111;
}
.explain-lead { margin: 0; white-space: nowrap; }
.explain-list { margin: 33px 0 0; padding-left: 80px; }
.explain-list li { white-space: nowrap; }
.explain-list b { font-weight: 700; }
.pager {
  position: absolute;
  top: 642px;
  width: 56px;
  height: 104px;
  padding: 0;
  background: #fff;
  border: 4px solid #98cc7e;
  box-shadow: 0 6px 24px rgba(0, 0, 0, .12);
  display: flex;
  align-items: center;
  justify-content: center;
}
.pager svg { width: 22px; height: 42px; }
.pager-prev { left: -1px; border-left: 0; border-radius: 0 8px 8px 0; padding-right: 4px; }
.pager-next { right: -2px; border-right: 0; border-radius: 8px 0 0 8px; padding-left: 8px; }
.main-scroll {
  position: absolute;
  left: 1962px;
  top: 1036px;
  width: 12px;
  height: 346px;
  border-radius: 6px;
  background: #dde0e5;
}
.webex {
  position: absolute;
  left: 1848px;
  top: 1247px;
  width: 96px;
  height: 96px;
  border-radius: 50%;
  box-shadow: 0 10px 16px rgba(0, 0, 0, .3);
}
.webex svg { width: 96px; height: 96px; display: block; }
.wx-beta { font-family: Inter, sans-serif; font-size: 14px; font-weight: 600; fill: #1e2a30; }
```
